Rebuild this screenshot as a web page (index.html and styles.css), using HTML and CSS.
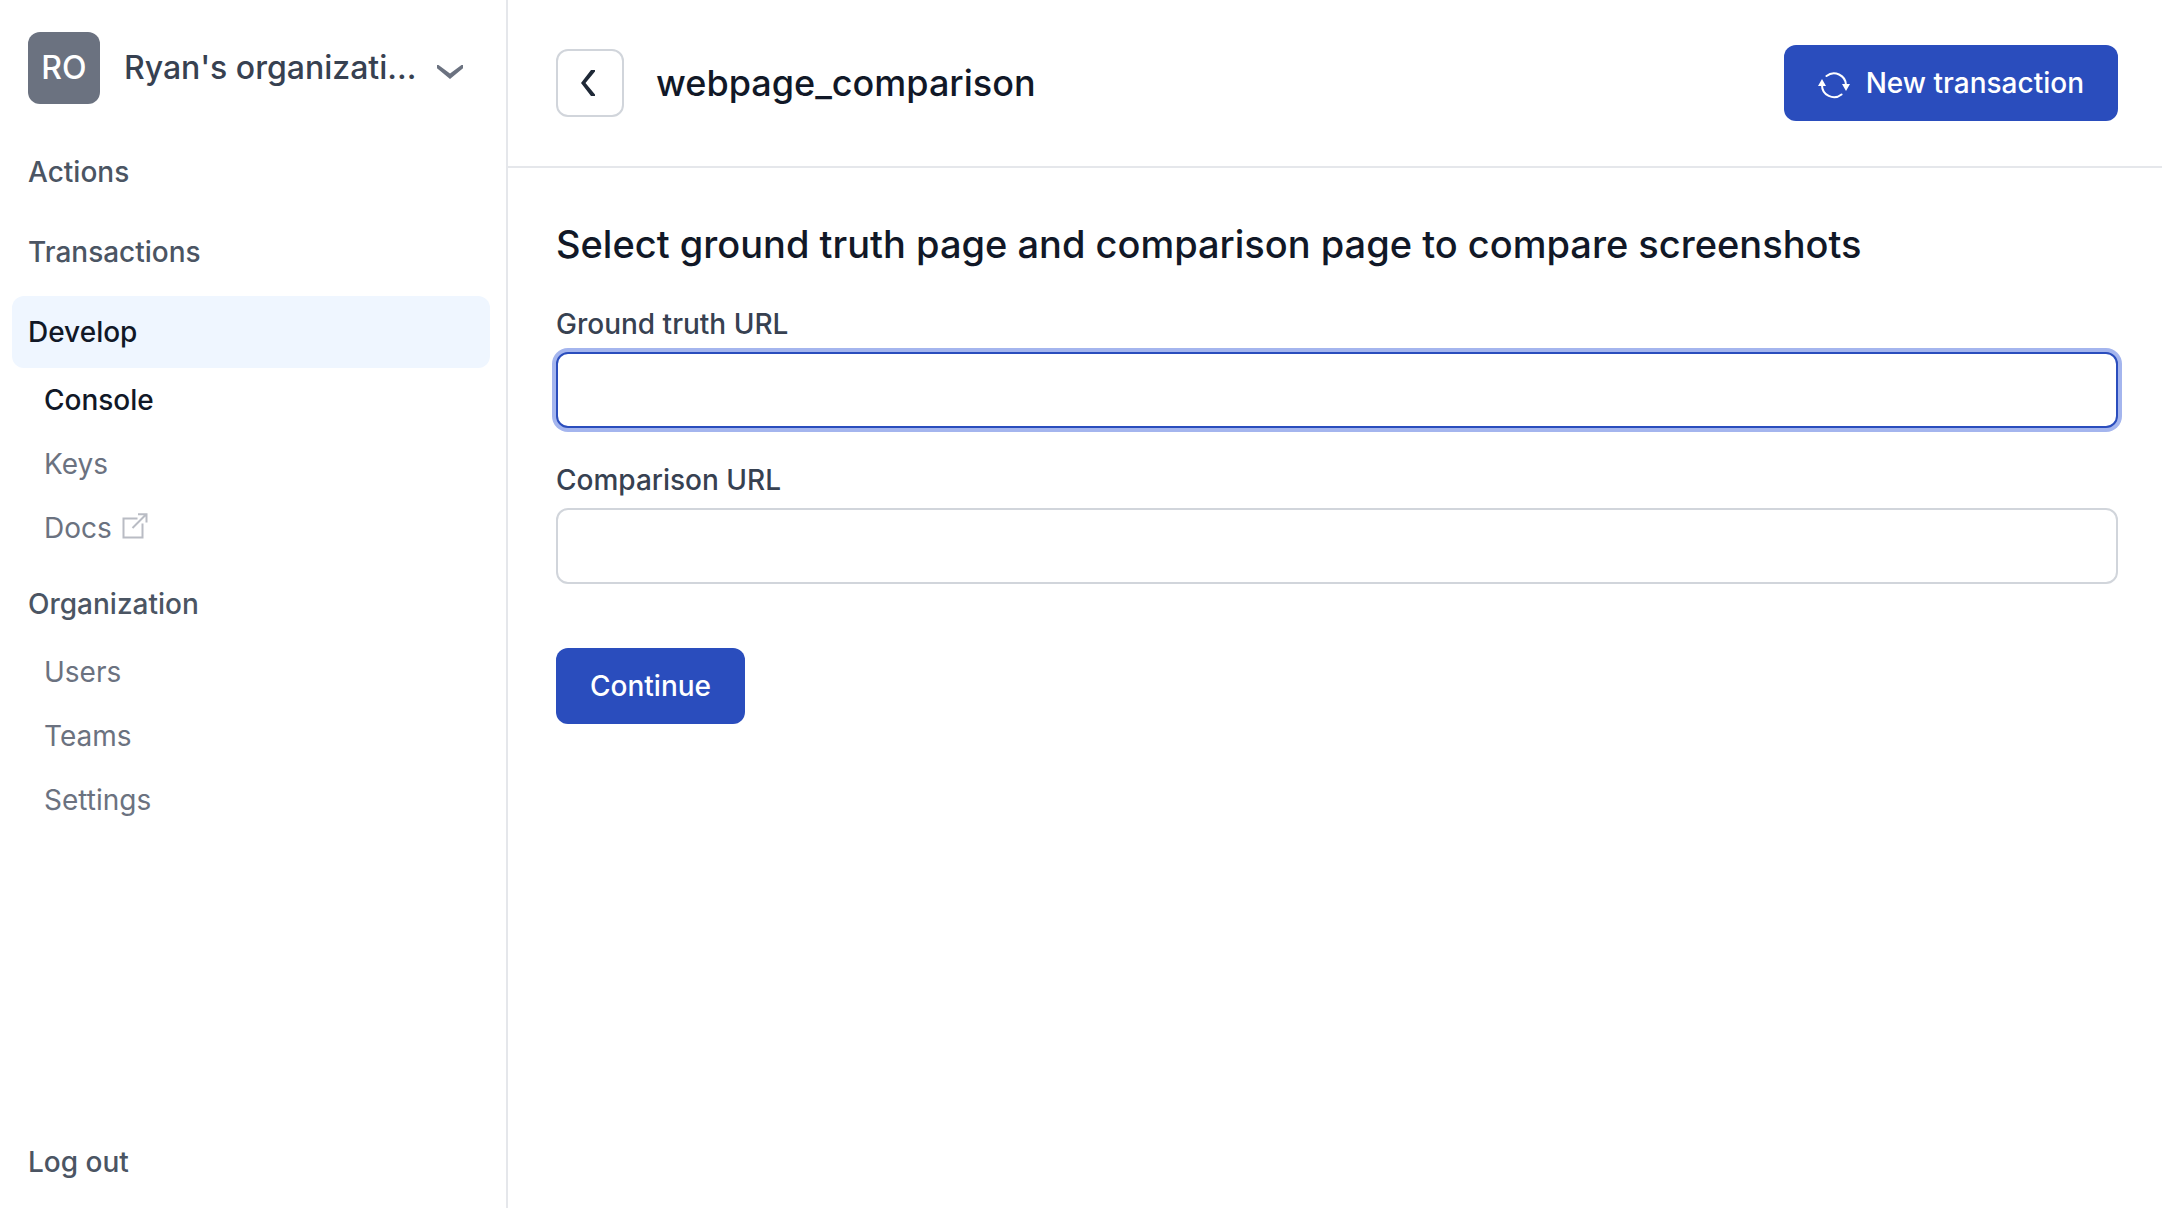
FILE: index.html
```html
<!DOCTYPE html>
<html lang="en">
<head>
<meta charset="utf-8">
<meta name="viewport" content="width=device-width, initial-scale=1">
<title>webpage_comparison</title>
<link rel="stylesheet" href="styles.css">
</head>
<body>
<div class="app">
  <aside class="sidebar">
    <button class="org" type="button">
      <span class="avatar">RO</span>
      <span class="org-name">Ryan's organizati...</span>
      <svg class="org-chevron" viewBox="0 0 26 14" aria-hidden="true"><path d="M0 0h1.500L13 8.500 24.500 0H26V3.300L13 14 0 3.300z"/></svg>
    </button>
    <nav class="nav">
      <a class="item" href="#">Actions</a>
      <a class="item" href="#">Transactions</a>
      <div class="group">
        <a class="item item-active" href="#">Develop</a>
        <a class="sub sub-active" href="#">Console</a>
        <a class="sub" href="#">Keys</a>
        <a class="sub" href="#">Docs
          <svg class="external" viewBox="0 0 26 26" aria-hidden="true"><path d="M15.500 5.500H1.500V24.500H20.500V10.500M10.500 15 24 1.500M16 1.200H24.500V9.500"/></svg>
        </a>
      </div>
      <div class="group">
        <a class="item" href="#">Organization</a>
        <a class="sub" href="#">Users</a>
        <a class="sub" href="#">Teams</a>
        <a class="sub" href="#">Settings</a>
      </div>
    </nav>
    <a class="item logout" href="#">Log out</a>
  </aside>
  <div class="content">
    <header class="header">
      <button class="back" type="button" aria-label="Back">
        <svg class="back-icon" viewBox="0 0 14 26" aria-hidden="true"><path d="M10 0H14V1.500L4.500 13 14 24.500V26H10L0 13z"/></svg>
      </button>
      <h1 class="title">webpage_comparison</h1>
      <button class="primary" type="button">
        <svg class="refresh" viewBox="0 0 32 28" aria-hidden="true">
          <path class="arc" d="M8.500 5A12 12 0 0 1 28 14M23.500 23.500A12 12 0 0 1 4 14"/>
          <path class="head" d="M24 13H32L28 20zM0 15H8L4 8z"/>
        </svg>
        New transaction
      </button>
    </header>
    <main class="main">
      <h2 class="heading">Select ground truth page and comparison page to compare screenshots</h2>
      <form class="form">
        <div class="field">
          <label for="truth">Ground truth URL</label>
          <input class="input" id="truth" type="text" autofocus>
        </div>
        <div class="field">
          <label for="comparison">Comparison URL</label>
          <input class="input" id="comparison" type="text">
        </div>
        <button class="primary submit" type="button">Continue</button>
      </form>
    </main>
  </div>
</div>
</body>
</html>
```
FILE: styles.css
```css
*,
*::before,
*::after {
  box-sizing: border-box;
}

body {
  margin: 0;
  background: #fff;
  color: #111827;
  font-family: Inter, "Liberation Sans", sans-serif;
  font-size: 28px;
  line-height: 40px;
}

button,
input {
  font: inherit;
}

a {
  color: inherit;
  text-decoration: none;
}

.app {
  display: flex;
  min-height: 100vh;
}

.sidebar {
  display: flex;
  flex: none;
  flex-direction: column;
  width: 508px;
  padding: 32px 16px 10px 12px;
  border-right: 2px solid #e5e7eb;
}

.org {
  display: flex;
  align-items: center;
  margin-bottom: 32px;
  padding: 0 27px 0 16px;
  border: 0;
  background: none;
  color: #374151;
  font-size: 32px;
  font-weight: 500;
  text-align: left;
}

.avatar {
  display: grid;
  flex: none;
  place-items: center;
  width: 72px;
  height: 72px;
  margin-right: 24px;
  border-radius: 12px;
  background: #6b7280;
  color: #fff;
}

.org-name {
  flex: 1;
  white-space: nowrap;
}

.org-chevron {
  flex: none;
  width: 26px;
  height: 14px;
  margin-top: 8px;
  fill: #6b7280;
}

.nav {
  display: flex;
  flex-direction: column;
  gap: 8px;
}

.item {
  display: block;
  padding: 16px;
  border-radius: 12px;
  color: #4b5563;
  font-weight: 500;
}

.item-active {
  background: #eff6ff;
  color: #111827;
}

.sub {
  display: flex;
  align-items: center;
  gap: 10px;
  padding: 12px 32px;
  color: #6b7280;
}

.sub-active {
  color: #111827;
  font-weight: 500;
}

.external {
  width: 26px;
  height: 26px;
  margin-bottom: 4px;
  fill: none;
  stroke: #b9bcc4;
  stroke-width: 2;
}

.logout {
  margin-top: auto;
}

.content {
  flex: 1;
  min-width: 0;
}

.header {
  display: flex;
  align-items: center;
  padding: 45px 44px 45px 48px;
  border-bottom: 2px solid #e5e7eb;
}

.back {
  display: grid;
  place-items: center;
  width: 68px;
  height: 68px;
  padding: 0 4px 0 0;
  border: 2px solid #d1d5db;
  border-radius: 12px;
  background: #fff;
}

.back-icon {
  width: 14px;
  height: 26px;
  fill: #1f2937;
}

.title {
  flex: 1;
  margin: 0 32px;
  font-size: 36px;
  font-weight: 500;
}

.primary {
  display: flex;
  align-items: center;
  gap: 16px;
  padding: 18px 34px;
  border: 0;
  border-radius: 12px;
  background: #2a4dbd;
  color: #fff;
  font-weight: 500;
}

.refresh {
  width: 32px;
  height: 28px;
  margin-top: 4px;
}

.arc {
  fill: none;
  stroke: #fff;
  stroke-width: 2;
  stroke-linecap: round;
}

.head {
  fill: #fff;
}

.main {
  padding: 48px 44px 48px 48px;
}

.heading {
  margin: 0 0 32px;
  font-size: 38px;
  font-weight: 500;
  line-height: 56px;
}

.form {
  display: flex;
  flex-direction: column;
  gap: 32px;
}

.field {
  display: flex;
  flex-direction: column;
  gap: 8px;
  color: #374151;
  font-weight: 500;
}

.input {
  width: 100%;
  height: 76px;
  padding: 16px 24px;
  border: 2px solid #d1d5db;
  border-radius: 12px;
  background: #fff;
  color: #111827;
  caret-color: transparent;
}

.input:focus {
  border-color: #2a4dbd;
  outline: none;
  box-shadow: 0 0 0 4px #a4b5ee;
}

.submit {
  align-self: flex-start;
  margin-top: 32px;
}
```
